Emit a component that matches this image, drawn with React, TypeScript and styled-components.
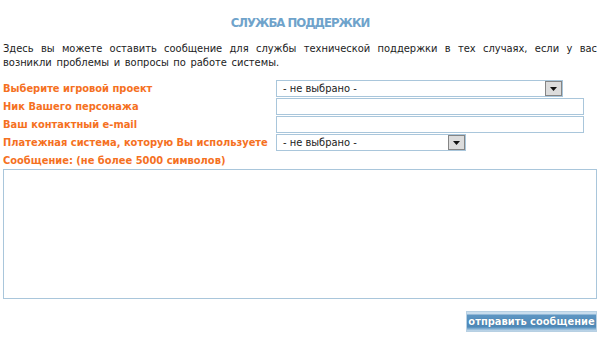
import * as React from 'react';
import styled, { createGlobalStyle } from 'styled-components';

const GlobalStyle = createGlobalStyle`
  body {
    margin: 0;
    background: #ffffff;
    font-family: "DejaVu Sans Condensed", "DejaVu Sans", sans-serif;
  }
`;

const Page = styled.div`
  width: 600px;
  padding: 14px 3px 0 3px;
  box-sizing: border-box;
`;

const Title = styled.h1`
  margin: 0;
  height: 18px;
  line-height: 18px;
  text-align: center;
  font-family: "DejaVu Sans Condensed", sans-serif;
  font-size: 13px;
  font-weight: bold;
  letter-spacing: -1px;
  color: #6fa3cb;
`;

const Intro = styled.p`
  margin: 10px 0 0 0;
  font-size: 11px;
  line-height: 14px;
  color: #222222;
  text-align: justify;
  word-spacing: 1.5px;
`;

const FormGrid = styled.div`
  margin-top: 10px;
  display: grid;
  grid-template-columns: 273px 1fr;
  grid-auto-rows: 17px;
  row-gap: 1px;
  align-items: center;
`;

const Label = styled.label`
  font-size: 11px;
  font-weight: bold;
  color: #f5711f;
  white-space: nowrap;
`;

const FullLabel = styled(Label)`
  grid-column: 1 / span 2;
`;

const SelectBox = styled.div<{ $width: number }>`
  width: ${(p) => p.$width}px;
  height: 17px;
  box-sizing: border-box;
  border: 1px solid #a9c6db;
  display: flex;
  align-items: center;
  background: #ffffff;
`;

const SelectText = styled.span`
  flex: 1;
  padding-left: 6px;
  font-size: 11px;
  color: #222222;
`;

const ArrowBox = styled.span`
  width: 17px;
  height: 15px;
  box-sizing: border-box;
  border: 1px solid #858585;
  background: #dcdcdc;
  display: flex;
  align-items: center;
  justify-content: center;
`;

const TextInput = styled.input`
  width: 308px;
  height: 17px;
  box-sizing: border-box;
  border: 1px solid #a9c6db;
  padding: 0 4px;
  font-size: 11px;
  outline: none;
`;

const MessageArea = styled.textarea`
  display: block;
  width: 100%;
  height: 130px;
  margin-top: 0;
  box-sizing: border-box;
  border: 1px solid #a9c6db;
  resize: none;
  font-size: 11px;
  outline: none;
`;

const ButtonRow = styled.div`
  display: flex;
  justify-content: flex-end;
  margin-top: 12px;
`;

const SubmitButton = styled.button`
  width: 131px;
  height: 21px;
  padding: 0;
  border: 1px solid #b7d0e3;
  background: linear-gradient(
    to bottom,
    #c9dded 0px,
    #c9dded 2px,
    #5d95c2 3px,
    #4f89b8 15px,
    #6a9fc8 16px,
    #c9dded 19px
  );
  color: #ffffff;
  font-family: "DejaVu Sans Condensed", sans-serif;
  font-size: 11px;
  font-weight: bold;
  text-shadow: 0 0 1px #2d5f87;
  cursor: pointer;
`;

const Arrow = () => (
  <svg width="7" height="4" viewBox="0 0 7 4">
    <path d="M0 0 H7 L3.5 4 Z" fill="#111111" />
  </svg>
);

const FakeSelect = ({ width }: { width: number }) => (
  <SelectBox $width={width}>
    <SelectText>- не выбрано -</SelectText>
    <ArrowBox>
      <Arrow />
    </ArrowBox>
  </SelectBox>
);

export default function App() {
  return (
    <Page>
      <GlobalStyle />
      <Title>СЛУЖБА ПОДДЕРЖКИ</Title>
      <Intro>
        Здесь вы можете оставить сообщение для службы технической поддержки в тех случаях, если у вас
        возникли проблемы и вопросы по работе системы.
      </Intro>
      <FormGrid>
        <Label>Выберите игровой проект</Label>
        <FakeSelect width={287} />
        <Label>Ник Вашего персонажа</Label>
        <TextInput />
        <Label>Ваш контактный e-mail</Label>
        <TextInput />
        <Label>Платежная система, которую Вы используете</Label>
        <FakeSelect width={190} />
        <FullLabel>Сообщение: (не более 5000 символов)</FullLabel>
      </FormGrid>
      <MessageArea />
      <ButtonRow>
        <SubmitButton>отправить сообщение</SubmitButton>
      </ButtonRow>
    </Page>
  );
}
